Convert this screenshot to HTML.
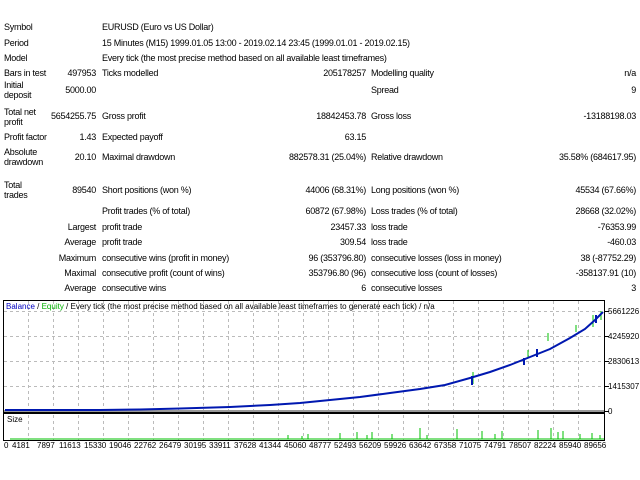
<!DOCTYPE html>
<html><head><meta charset="utf-8"><style>
body{margin:0;width:640px;height:480px;background:#fff;overflow:hidden;position:relative;font-family:"Liberation Sans","DejaVu Sans",sans-serif;font-size:9px;color:#000;letter-spacing:-0.25px}
.t{position:absolute;white-space:nowrap;line-height:10px}
.r{text-align:right}
.s{font-size:8px;letter-spacing:0}
</style></head><body>
<div class="t" style="left:4px;top:22px">Symbol</div>
<div class="t" style="left:102px;top:22px">EURUSD (Euro vs US Dollar)</div>
<div class="t" style="left:4px;top:38px">Period</div>
<div class="t" style="left:102px;top:38px">15 Minutes (M15) 1999.01.05 13:00 - 2019.02.14 23:45 (1999.01.01 - 2019.02.15)</div>
<div class="t" style="left:4px;top:53px">Model</div>
<div class="t" style="left:102px;top:53px">Every tick (the most precise method based on all available least timeframes)</div>
<div class="t" style="left:4px;top:68px">Bars in test</div>
<div class="t r" style="right:544px;top:68px">497953</div>
<div class="t" style="left:102px;top:68px">Ticks modelled</div>
<div class="t r" style="right:274px;top:68px">205178257</div>
<div class="t" style="left:371px;top:68px">Modelling quality</div>
<div class="t r" style="right:4px;top:68px">n/a</div>
<div class="t" style="left:4px;top:80px">Initial<br>deposit</div>
<div class="t r" style="right:544px;top:85px">5000.00</div>
<div class="t" style="left:371px;top:85px">Spread</div>
<div class="t r" style="right:4px;top:85px">9</div>
<div class="t" style="left:4px;top:107px">Total net<br>profit</div>
<div class="t r" style="right:544px;top:111px">5654255.75</div>
<div class="t" style="left:102px;top:111px">Gross profit</div>
<div class="t r" style="right:274px;top:111px">18842453.78</div>
<div class="t" style="left:371px;top:111px">Gross loss</div>
<div class="t r" style="right:4px;top:111px">-13188198.03</div>
<div class="t" style="left:4px;top:132px">Profit factor</div>
<div class="t r" style="right:544px;top:132px">1.43</div>
<div class="t" style="left:102px;top:132px">Expected payoff</div>
<div class="t r" style="right:274px;top:132px">63.15</div>
<div class="t" style="left:4px;top:147px">Absolute<br>drawdown</div>
<div class="t r" style="right:544px;top:152px">20.10</div>
<div class="t" style="left:102px;top:152px">Maximal drawdown</div>
<div class="t r" style="right:274px;top:152px">882578.31 (25.04%)</div>
<div class="t" style="left:371px;top:152px">Relative drawdown</div>
<div class="t r" style="right:4px;top:152px">35.58% (684617.95)</div>
<div class="t" style="left:4px;top:180px">Total<br>trades</div>
<div class="t r" style="right:544px;top:185px">89540</div>
<div class="t" style="left:102px;top:185px">Short positions (won %)</div>
<div class="t r" style="right:274px;top:185px">44006 (68.31%)</div>
<div class="t" style="left:371px;top:185px">Long positions (won %)</div>
<div class="t r" style="right:4px;top:185px">45534 (67.66%)</div>
<div class="t" style="left:102px;top:206px">Profit trades (% of total)</div>
<div class="t r" style="right:274px;top:206px">60872 (67.98%)</div>
<div class="t" style="left:371px;top:206px">Loss trades (% of total)</div>
<div class="t r" style="right:4px;top:206px">28668 (32.02%)</div>
<div class="t r" style="right:544px;top:222px">Largest</div>
<div class="t" style="left:102px;top:222px">profit trade</div>
<div class="t r" style="right:274px;top:222px">23457.33</div>
<div class="t" style="left:371px;top:222px">loss trade</div>
<div class="t r" style="right:4px;top:222px">-76353.99</div>
<div class="t r" style="right:544px;top:237px">Average</div>
<div class="t" style="left:102px;top:237px">profit trade</div>
<div class="t r" style="right:274px;top:237px">309.54</div>
<div class="t" style="left:371px;top:237px">loss trade</div>
<div class="t r" style="right:4px;top:237px">-460.03</div>
<div class="t r" style="right:544px;top:253px">Maximum</div>
<div class="t" style="left:102px;top:253px">consecutive wins (profit in money)</div>
<div class="t r" style="right:274px;top:253px">96 (353796.80)</div>
<div class="t" style="left:371px;top:253px">consecutive losses (loss in money)</div>
<div class="t r" style="right:4px;top:253px">38 (-87752.29)</div>
<div class="t r" style="right:544px;top:268px">Maximal</div>
<div class="t" style="left:102px;top:268px">consecutive profit (count of wins)</div>
<div class="t r" style="right:274px;top:268px">353796.80 (96)</div>
<div class="t" style="left:371px;top:268px">consecutive loss (count of losses)</div>
<div class="t r" style="right:4px;top:268px">-358137.91 (10)</div>
<div class="t r" style="right:544px;top:283px">Average</div>
<div class="t" style="left:102px;top:283px">consecutive wins</div>
<div class="t r" style="right:274px;top:283px">6</div>
<div class="t" style="left:371px;top:283px">consecutive losses</div>
<div class="t r" style="right:4px;top:283px">3</div>

<svg style="position:absolute;left:0;top:0" width="640" height="480">
<g stroke="#bbb" stroke-dasharray="3,3" stroke-width="1">
<line x1="4" x2="604" y1="311.5" y2="311.5"/><line x1="4" x2="604" y1="336.5" y2="336.5"/><line x1="4" x2="604" y1="361.5" y2="361.5"/><line x1="4" x2="604" y1="386.5" y2="386.5"/>
<line x1="28.5" x2="28.5" y1="301" y2="440"/><line x1="53.5" x2="53.5" y1="301" y2="440"/><line x1="78.5" x2="78.5" y1="301" y2="440"/><line x1="103.5" x2="103.5" y1="301" y2="440"/><line x1="128.5" x2="128.5" y1="301" y2="440"/><line x1="153.5" x2="153.5" y1="301" y2="440"/><line x1="178.5" x2="178.5" y1="301" y2="440"/><line x1="203.5" x2="203.5" y1="301" y2="440"/><line x1="228.5" x2="228.5" y1="301" y2="440"/><line x1="253.5" x2="253.5" y1="301" y2="440"/><line x1="278.5" x2="278.5" y1="301" y2="440"/><line x1="303.5" x2="303.5" y1="301" y2="440"/><line x1="328.5" x2="328.5" y1="301" y2="440"/><line x1="353.5" x2="353.5" y1="301" y2="440"/><line x1="378.5" x2="378.5" y1="301" y2="440"/><line x1="403.5" x2="403.5" y1="301" y2="440"/><line x1="428.5" x2="428.5" y1="301" y2="440"/><line x1="453.5" x2="453.5" y1="301" y2="440"/><line x1="478.5" x2="478.5" y1="301" y2="440"/><line x1="503.5" x2="503.5" y1="301" y2="440"/><line x1="528.5" x2="528.5" y1="301" y2="440"/><line x1="553.5" x2="553.5" y1="301" y2="440"/><line x1="578.5" x2="578.5" y1="301" y2="440"/>
</g>
<line x1="4" x2="604" y1="411" y2="411" stroke="#999" stroke-width="2"/>
<g stroke="#00c000" stroke-width="1">
<line x1="473" x2="473" y1="372" y2="384"/><line x1="528" x2="528" y1="350" y2="358"/><line x1="548" x2="548" y1="333" y2="341"/><line x1="593" x2="593" y1="315" y2="327"/><line x1="601" x2="601" y1="311" y2="320"/><line x1="576" x2="576" y1="325" y2="332"/>
</g>
<polyline fill="none" stroke="#0018b0" stroke-width="2" points="5,410 100,410 140,409.5 180,408.5 230,407 270,405 300,403 330,400 360,397 390,393 420,389 445,385 470,378 490,372 510,365 530,357 550,349 570,338 585,329 595,320 603,312"/>
<g stroke="#0018b0" stroke-width="2"><line x1="472" x2="472" y1="376" y2="385"/><line x1="524" x2="524" y1="358" y2="365"/><line x1="537" x2="537" y1="349" y2="357"/><line x1="596" x2="596" y1="315" y2="323"/></g>
<path d="M10 439 H604" stroke="#00c000" stroke-width="1"/>
<g stroke="#00c000" stroke-width="1">
<line x1="340" x2="340" y1="433" y2="439"/><line x1="357" x2="357" y1="432" y2="439"/><line x1="367" x2="367" y1="435" y2="439"/><line x1="372" x2="372" y1="432" y2="439"/><line x1="392" x2="392" y1="434" y2="439"/><line x1="420" x2="420" y1="428" y2="439"/><line x1="427" x2="427" y1="435" y2="439"/><line x1="457" x2="457" y1="429" y2="439"/><line x1="482" x2="482" y1="431" y2="439"/><line x1="495" x2="495" y1="434" y2="439"/><line x1="502" x2="502" y1="431" y2="439"/><line x1="538" x2="538" y1="430" y2="439"/><line x1="551" x2="551" y1="428" y2="439"/><line x1="558" x2="558" y1="432" y2="439"/><line x1="563" x2="563" y1="431" y2="439"/><line x1="580" x2="580" y1="434" y2="439"/><line x1="592" x2="592" y1="433" y2="439"/><line x1="600" x2="600" y1="435" y2="439"/><line x1="308" x2="308" y1="434" y2="439"/><line x1="302" x2="302" y1="436" y2="439"/><line x1="288" x2="288" y1="435" y2="439"/>
</g>
<rect x="3.5" y="300.5" width="601" height="112" fill="none" stroke="#000"/>
<rect x="3.5" y="413.5" width="601" height="27" fill="none" stroke="#000"/>
<g stroke="#000"><line x1="605" x2="609" y1="311.5" y2="311.5"/><line x1="605" x2="609" y1="336.5" y2="336.5"/><line x1="605" x2="609" y1="361.5" y2="361.5"/><line x1="605" x2="609" y1="386.5" y2="386.5"/><line x1="605" x2="609" y1="411.5" y2="411.5"/></g>
</svg>
<div class="t s" style="left:6px;top:302px"><span style="color:#0000c0">Balance</span> / <span style="color:#00b000">Equity</span> / Every tick (the most precise method based on all available least timeframes to generate each tick) / n/a</div>
<div class="t s" style="left:7px;top:415px">Size</div>
<div class="t s" style="left:608px;top:307px">5661226</div>
<div class="t s" style="left:608px;top:332px">4245920</div>
<div class="t s" style="left:608px;top:357px">2830613</div>
<div class="t s" style="left:608px;top:382px">1415307</div>
<div class="t s" style="left:608px;top:407px">0</div>
<div class="t s" style="left:4px;top:441px">0</div>
<div class="t s" style="left:12px;top:441px">4181</div>
<div class="t s" style="left:37px;top:441px">7897</div>
<div class="t s" style="left:59px;top:441px">11613</div>
<div class="t s" style="left:84px;top:441px">15330</div>
<div class="t s" style="left:109px;top:441px">19046</div>
<div class="t s" style="left:134px;top:441px">22762</div>
<div class="t s" style="left:159px;top:441px">26479</div>
<div class="t s" style="left:184px;top:441px">30195</div>
<div class="t s" style="left:209px;top:441px">33911</div>
<div class="t s" style="left:234px;top:441px">37628</div>
<div class="t s" style="left:259px;top:441px">41344</div>
<div class="t s" style="left:284px;top:441px">45060</div>
<div class="t s" style="left:309px;top:441px">48777</div>
<div class="t s" style="left:334px;top:441px">52493</div>
<div class="t s" style="left:359px;top:441px">56209</div>
<div class="t s" style="left:384px;top:441px">59926</div>
<div class="t s" style="left:409px;top:441px">63642</div>
<div class="t s" style="left:434px;top:441px">67358</div>
<div class="t s" style="left:459px;top:441px">71075</div>
<div class="t s" style="left:484px;top:441px">74791</div>
<div class="t s" style="left:509px;top:441px">78507</div>
<div class="t s" style="left:534px;top:441px">82224</div>
<div class="t s" style="left:559px;top:441px">85940</div>
<div class="t s" style="left:584px;top:441px">89656</div>
</body></html>
